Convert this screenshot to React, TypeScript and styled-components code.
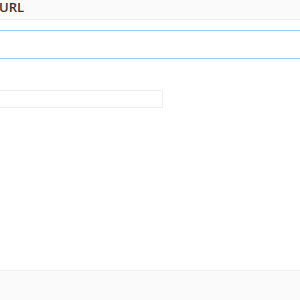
import React from 'react';
import styled, { createGlobalStyle } from 'styled-components';

const GlobalStyle = createGlobalStyle`
  html, body {
    margin: 0;
    padding: 0;
    background: #ffffff;
    font-family: "Open Sans", "Noto Sans", sans-serif;
  }
`;

const Page = styled.div`
  display: flex;
  flex-direction: column;
  height: 300px;
  overflow: hidden;
`;

const Header = styled.div`
  height: 19px;
  background: #fafafa;
  border-bottom: 1px solid #eeeeee;
  display: flex;
  align-items: center;
  padding-left: 0;
  margin-left: -1px;
`;

const Title = styled.span`
  font-size: 13px;
  font-weight: 600;
  color: #333333;
  line-height: 1;
  margin-top: -4px;
`;

const Body = styled.div`
  flex: 1;
  padding-top: 10px;
  display: flex;
  flex-direction: column;
`;

const UrlField = styled.div`
  height: 27px;
  border-top: 1px solid #9fcdf0;
  border-bottom: 1px solid #9fcdf0;
`;

const Input = styled.div`
  margin-top: 31px;
  margin-left: -10px;
  width: 171px;
  height: 16px;
  border: 1px solid #eeeeee;
  background: #ffffff;
`;

const Footer = styled.div`
  height: 29px;
  background: #fafafa;
  border-top: 1px solid #eeeeee;
`;

export default function App() {
  return (
    <>
      <GlobalStyle />
      <Page>
        <Header>
          <Title>URL</Title>
        </Header>
        <Body>
          <UrlField />
          <Input />
        </Body>
        <Footer />
      </Page>
    </>
  );
}
